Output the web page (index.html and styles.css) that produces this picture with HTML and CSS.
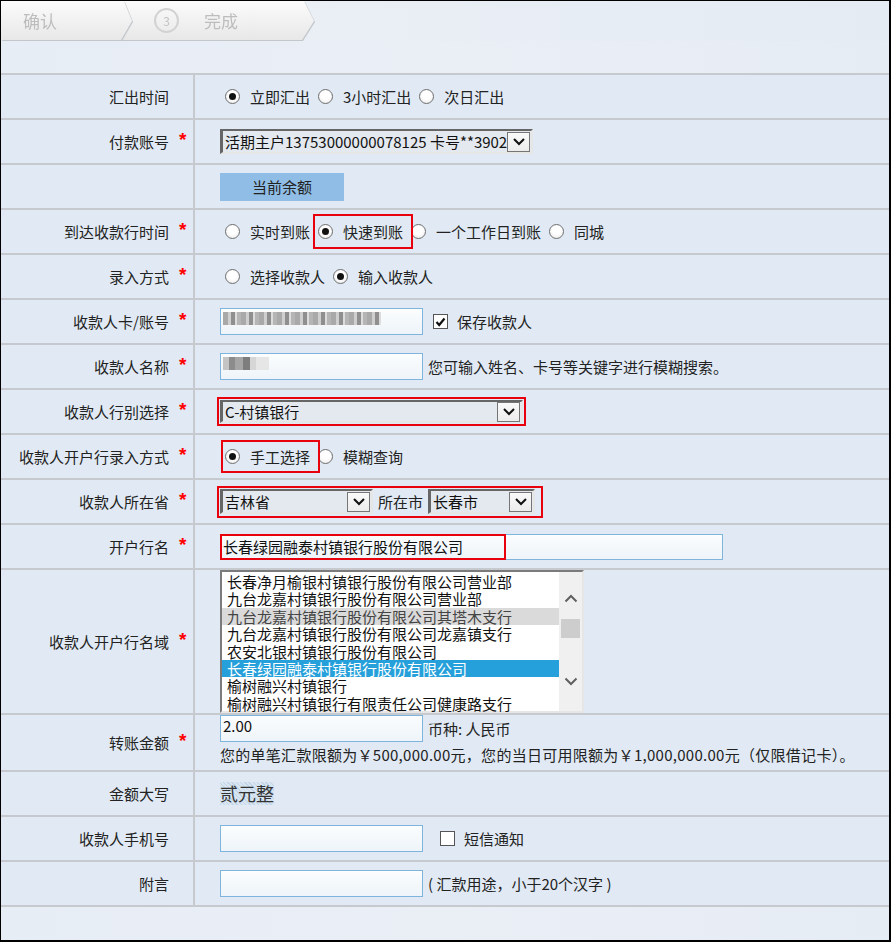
FILE: index.html
```html
<!DOCTYPE html>
<html lang="zh-CN">
<head>
  <meta charset="UTF-8">
  <meta name="viewport" content="width=device-width, initial-scale=1.0">
  <title>跨行汇款</title>
  <link rel="stylesheet" href="styles.css">
</head>
<body>
  <div class="frame">
    <div class="steps">
      <div class="step step-first"><div class="step-bg">确认</div></div>
      <div class="step step-last"><div class="step-bg"><span class="num">3</span>完成</div></div>
    </div>
    <div class="gap"></div>

    <div class="form">
      <div class="row">
        <div class="lbl">汇出时间<i class="star"></i></div>
        <div class="val opts">
          <label class="opt"><span class="radio on"></span>立即汇出</label>
          <label class="opt"><span class="radio"></span>3小时汇出</label>
          <label class="opt"><span class="radio"></span>次日汇出</label>
        </div>
      </div>

      <div class="row">
        <div class="lbl">付款账号<i class="star">*</i></div>
        <div class="val">
          <div class="sel sel-acct">
            <span>活期主户13753000000078125 卡号**3902</span>
            <b class="btn"><svg width="12" height="8" viewBox="0 0 12 8"><polyline points="1,1 6,6 11,1" fill="none" stroke="#111" stroke-width="2"/></svg></b>
          </div>
        </div>
      </div>

      <div class="row">
        <div class="lbl"><i class="star"></i></div>
        <div class="val"><button class="balance">当前余额</button></div>
      </div>

      <div class="row">
        <div class="lbl">到达收款行时间<i class="star">*</i></div>
        <div class="val opts">
          <label class="opt"><span class="radio"></span>实时到账</label>
          <label class="opt hl hl-fast"><span class="radio on"></span>快速到账</label>
          <label class="opt"><span class="radio"></span>一个工作日到账</label>
          <label class="opt"><span class="radio"></span>同城</label>
        </div>
      </div>

      <div class="row">
        <div class="lbl">录入方式<i class="star">*</i></div>
        <div class="val opts">
          <label class="opt"><span class="radio"></span>选择收款人</label>
          <label class="opt"><span class="radio on"></span>输入收款人</label>
        </div>
      </div>

      <div class="row">
        <div class="lbl">收款人卡/账号<i class="star">*</i></div>
        <div class="val">
          <div class="inp"><span class="blur blur-long"></span></div>
          <label class="chk-opt"><span class="check on"><svg width="11" height="10" viewBox="0 0 11 10"><polyline points="1.5,5 4.2,8 9.5,1.5" fill="none" stroke="#111" stroke-width="2.2"/></svg></span>保存收款人</label>
        </div>
      </div>

      <div class="row">
        <div class="lbl">收款人名称<i class="star">*</i></div>
        <div class="val">
          <div class="inp"><span class="blur blur-short"></span></div>
          <span class="hint">您可输入姓名、卡号等关键字进行模糊搜索。</span>
        </div>
      </div>

      <div class="row">
        <div class="lbl">收款人行别选择<i class="star">*</i></div>
        <div class="val">
          <div class="hl hl-box">
            <div class="sel sel-bank">
              <span>C-村镇银行</span>
              <b class="btn"><svg width="12" height="8" viewBox="0 0 12 8"><polyline points="1,1 6,6 11,1" fill="none" stroke="#111" stroke-width="2"/></svg></b>
            </div>
          </div>
        </div>
      </div>

      <div class="row">
        <div class="lbl">收款人开户行录入方式<i class="star">*</i></div>
        <div class="val opts">
          <label class="opt hl hl-manual"><span class="radio on"></span>手工选择</label>
          <label class="opt"><span class="radio"></span>模糊查询</label>
        </div>
      </div>

      <div class="row">
        <div class="lbl">收款人所在省<i class="star">*</i></div>
        <div class="val">
          <div class="hl hl-area area">
            <div class="sel sel-prov">
              <span>吉林省</span>
              <b class="btn"><svg width="12" height="8" viewBox="0 0 12 8"><polyline points="1,1 6,6 11,1" fill="none" stroke="#111" stroke-width="2"/></svg></b>
            </div>
            <span class="city-lbl">所在市</span>
            <div class="sel sel-city">
              <span>长春市</span>
              <b class="btn"><svg width="12" height="8" viewBox="0 0 12 8"><polyline points="1,1 6,6 11,1" fill="none" stroke="#111" stroke-width="2"/></svg></b>
            </div>
          </div>
        </div>
      </div>

      <div class="row">
        <div class="lbl">开户行名<i class="star">*</i></div>
        <div class="val">
          <div class="inp inp-wide hl hl-name">长春绿园融泰村镇银行股份有限公司</div>
        </div>
      </div>

      <div class="row row-list">
        <div class="lbl">收款人开户行名域<i class="star">*</i></div>
        <div class="val">
          <div class="list">
            <div class="items">
              <div>长春净月榆银村镇银行股份有限公司营业部</div>
              <div>九台龙嘉村镇银行股份有限公司营业部</div>
              <div class="hover">九台龙嘉村镇银行股份有限公司其塔木支行</div>
              <div>九台龙嘉村镇银行股份有限公司龙嘉镇支行</div>
              <div>农安北银村镇银行股份有限公司</div>
              <div class="picked">长春绿园融泰村镇银行股份有限公司</div>
              <div>榆树融兴村镇银行</div>
              <div>榆树融兴村镇银行有限责任公司健康路支行</div>
            </div>
            <div class="sb">
              <svg class="sb-up" width="14" height="9" viewBox="0 0 14 9"><polyline points="1.5,7.5 7,2 12.5,7.5" fill="none" stroke="#606060" stroke-width="2"/></svg>
              <span class="thumb"></span>
              <svg class="sb-down" width="14" height="9" viewBox="0 0 14 9"><polyline points="1.5,1.5 7,7 12.5,1.5" fill="none" stroke="#606060" stroke-width="2"/></svg>
            </div>
          </div>
        </div>
      </div>

      <div class="row row-amount">
        <div class="lbl">转账金额<i class="star">*</i></div>
        <div class="val val-stack">
          <div class="line">
            <div class="inp inp-amt">2.00</div>
            <span class="hint">币种: 人民币</span>
          </div>
          <p class="limit">您的单笔汇款限额为￥500,000.00元，您的当日可用限额为￥1,000,000.00元（仅限借记卡）。</p>
        </div>
      </div>

      <div class="row">
        <div class="lbl">金额大写<i class="star"></i></div>
        <div class="val"><span class="upper">贰元整</span></div>
      </div>

      <div class="row">
        <div class="lbl">收款人手机号<i class="star"></i></div>
        <div class="val">
          <div class="inp"></div>
          <label class="chk-opt chk-sms"><span class="check"></span>短信通知</label>
        </div>
      </div>

      <div class="row">
        <div class="lbl">附言<i class="star"></i></div>
        <div class="val">
          <div class="inp"></div>
          <span class="hint">( 汇款用途，小于20个汉字 )</span>
        </div>
      </div>
    </div>
  </div>
</body>
</html>
```

FILE: styles.css
```css
* {
  box-sizing: border-box;
}
body {
  margin: 0;
  font-family: "Noto Sans CJK SC", "Liberation Sans", sans-serif;
  font-size: 15px;
  color: #222;
}
.frame {
  width: 891px;
  height: 942px;
  border: 1px solid #000;
  border-right-width: 2px;
  border-bottom-width: 2px;
  background: linear-gradient(90deg, #e7edf5, #eaeff6 50%, #e6ecf4);
  display: flex;
  flex-direction: column;
  overflow: hidden;
}

/* step bar */
.steps {
  height: 40px;
  display: flex;
  background: linear-gradient(90deg, #edf1f6, #e4ebf3);
}
.step {
  filter: drop-shadow(1px 1px 0 #c3c7cc);
}
.step-bg {
  height: 39px;
  display: flex;
  align-items: center;
  background: linear-gradient(#fbfbfb, #e8e8e8);
  color: #bdbdbd;
  font-size: 17px;
}
.step-first {
  position: relative;
  z-index: 1;
}
.step-first .step-bg {
  width: 131px;
  padding-left: 22px;
  clip-path: polygon(0 0, 123px 0, 131px 20px, 120px 39px, 0 39px);
}
.step-last {
  margin-left: -11px;
}
.step-last .step-bg {
  width: 193px;
  padding-left: 33px;
  clip-path: polygon(0 0, 183px 0, 193px 20px, 181px 39px, 0 39px);
}
.num {
  width: 25px;
  height: 25px;
  border: 2px solid #d2d2d2;
  border-radius: 50%;
  display: flex;
  align-items: center;
  justify-content: center;
  font-size: 12px;
  color: #c2c2c2;
  margin-right: 25px;
}
.gap {
  height: 32px;
}

/* form rows */
.form {
  background: #e1eaf4;
  border-top: 2px solid #c6cace;
}
.row {
  display: flex;
  height: 45px;
  border-bottom: 2px solid #c6cace;
}
.row-list {
  height: 145px;
}
.row-amount {
  height: 57px;
}
.lbl {
  width: 194px;
  border-right: 2px solid #c6cace;
  display: flex;
  align-items: center;
  justify-content: flex-end;
  white-space: nowrap;
  color: #222;
}
.star {
  width: 24px;
  padding-left: 10px;
  font-style: normal;
  font-weight: bold;
  font-family: "Liberation Sans", sans-serif;
  font-size: 19px;
  color: #f00;
  align-self: center;
  margin-top: -4px;
}
.val {
  flex: 1;
  display: flex;
  align-items: center;
  padding-left: 25px;
  white-space: nowrap;
}
.opts {
  padding-left: 30px;
}

/* radios and checkboxes */
.opt {
  display: inline-flex;
  align-items: center;
  margin-right: 8px;
}
.radio {
  width: 15px;
  height: 15px;
  border: 1px solid #6f6f6f;
  border-radius: 50%;
  background: radial-gradient(circle at 50% 40%, #fff 40%, #e6e6e6);
  margin-right: 10px;
  display: flex;
  align-items: center;
  justify-content: center;
}
.radio.on::after {
  content: "";
  width: 7px;
  height: 7px;
  border-radius: 50%;
  background: #111;
}
.chk-opt {
  display: inline-flex;
  align-items: center;
  margin-left: 10px;
}
.chk-sms {
  margin-left: 17px;
}
.check {
  width: 15px;
  height: 15px;
  border: 1px solid #555;
  background: #fff;
  margin-right: 9px;
  display: flex;
  align-items: center;
  justify-content: center;
}

/* red annotation boxes */
.hl {
  position: relative;
}
.hl::after {
  content: "";
  position: absolute;
  border: 2px solid #e8000d;
  pointer-events: none;
}
.hl-fast::after {
  inset: -7px -10px -7px -5px;
}
.hl-manual::after {
  inset: -6px -10px -6px -4px;
}
.hl-box::after {
  inset: -3px;
}
.hl-area::after {
  inset: -3px -8px -4px -3px;
}
.hl-name::after {
  inset: -1px auto -1px -1px;
  width: 282px;
}
.hl-box,
.area {
  display: flex;
  align-items: center;
}

/* selects */
.sel {
  display: flex;
  align-items: center;
  height: 25px;
  border: 2px solid;
  border-color: #666 #e6e6e6 #e6e6e6 #666;
  border-left-width: 3px;
  background: #e4e9ef;
  padding-left: 2px;
  padding-right: 1px;
  color: #111;
}
.sel span {
  flex: 1;
}
.sel .btn {
  width: 23px;
  height: 20px;
  border: 1px solid #767676;
  background: linear-gradient(#fafafa, #ececec);
  display: flex;
  align-items: center;
  justify-content: center;
}
.sel-acct {
  width: 313px;
}
.sel-bank {
  width: 303px;
  height: 23px;
}
.sel-prov {
  width: 153px;
}
.sel-city {
  width: 107px;
}
.city-lbl {
  margin: 0 5px 0 5px;
}

/* inputs */
.inp {
  width: 203px;
  height: 27px;
  border: 1px solid #7fb4dd;
  background: linear-gradient(#fbfdfe, #eef4f9);
  display: flex;
  align-items: center;
  padding-left: 2px;
  color: #111;
}
.inp-wide {
  width: 503px;
  height: 26px;
}
.blur {
  height: 13px;
  margin-top: -6px;
  background: repeating-linear-gradient(90deg, #a9a9a9 0 5px, #cfcfcf 5px 8px, #8f8f8f 8px 12px, #dcdcdc 12px 14px, #b5b5b5 14px 18px);
}
.blur-long {
  width: 158px;
}
.blur-short {
  width: 46px;
  background: repeating-linear-gradient(90deg, #c4c4c4 0 6px, #8c8c8c 6px 12px, #a5a5a5 12px 20px, #7d7d7d 20px 27px, #d6d6d6 27px 33px, #e6e6e6 33px 46px);
}
.hint {
  margin-left: 5px;
}
.balance {
  width: 124px;
  height: 28px;
  border: 0;
  background: #8fbde6;
  font: inherit;
  color: #222;
  padding: 0;
}

/* list box */
.list {
  width: 364px;
  height: 143px;
  border: 2px solid;
  border-color: #7b7b7b #e6e6e6 #e6e6e6 #7b7b7b;
  background: #fff;
  display: flex;
}
.items {
  flex: 1;
  padding-top: 1px;
}
.items div {
  height: 17.4px;
  line-height: 17.4px;
  padding-left: 5px;
  color: #111;
}
.items .hover {
  background: #dadada;
  color: #444;
}
.items .picked {
  background: #26a0da;
  color: #fff;
}
.sb {
  width: 23px;
  background: #f0f0f0;
  display: flex;
  flex-direction: column;
  align-items: center;
  padding-top: 22px;
}
.thumb {
  width: 19px;
  height: 19px;
  background: #cdcdcd;
  margin-top: 16px;
}
.sb-down {
  margin-top: 39px;
}

/* amount */
.val-stack {
  flex-direction: column;
  align-items: flex-start;
  justify-content: flex-start;
}
.line {
  display: flex;
  align-items: center;
}
.inp-amt {
  align-items: flex-start;
  line-height: 18px;
  padding-top: 1px;
}
.limit {
  margin: 3px 0 0;
  line-height: 20px;
  letter-spacing: 0.28px;
}
.upper {
  font-size: 18px;
  line-height: 23px;
  color: #333;
  background: repeating-linear-gradient(45deg, #c2d6ea 0 1px, #d9e6f2 1px 3px);
}
```
